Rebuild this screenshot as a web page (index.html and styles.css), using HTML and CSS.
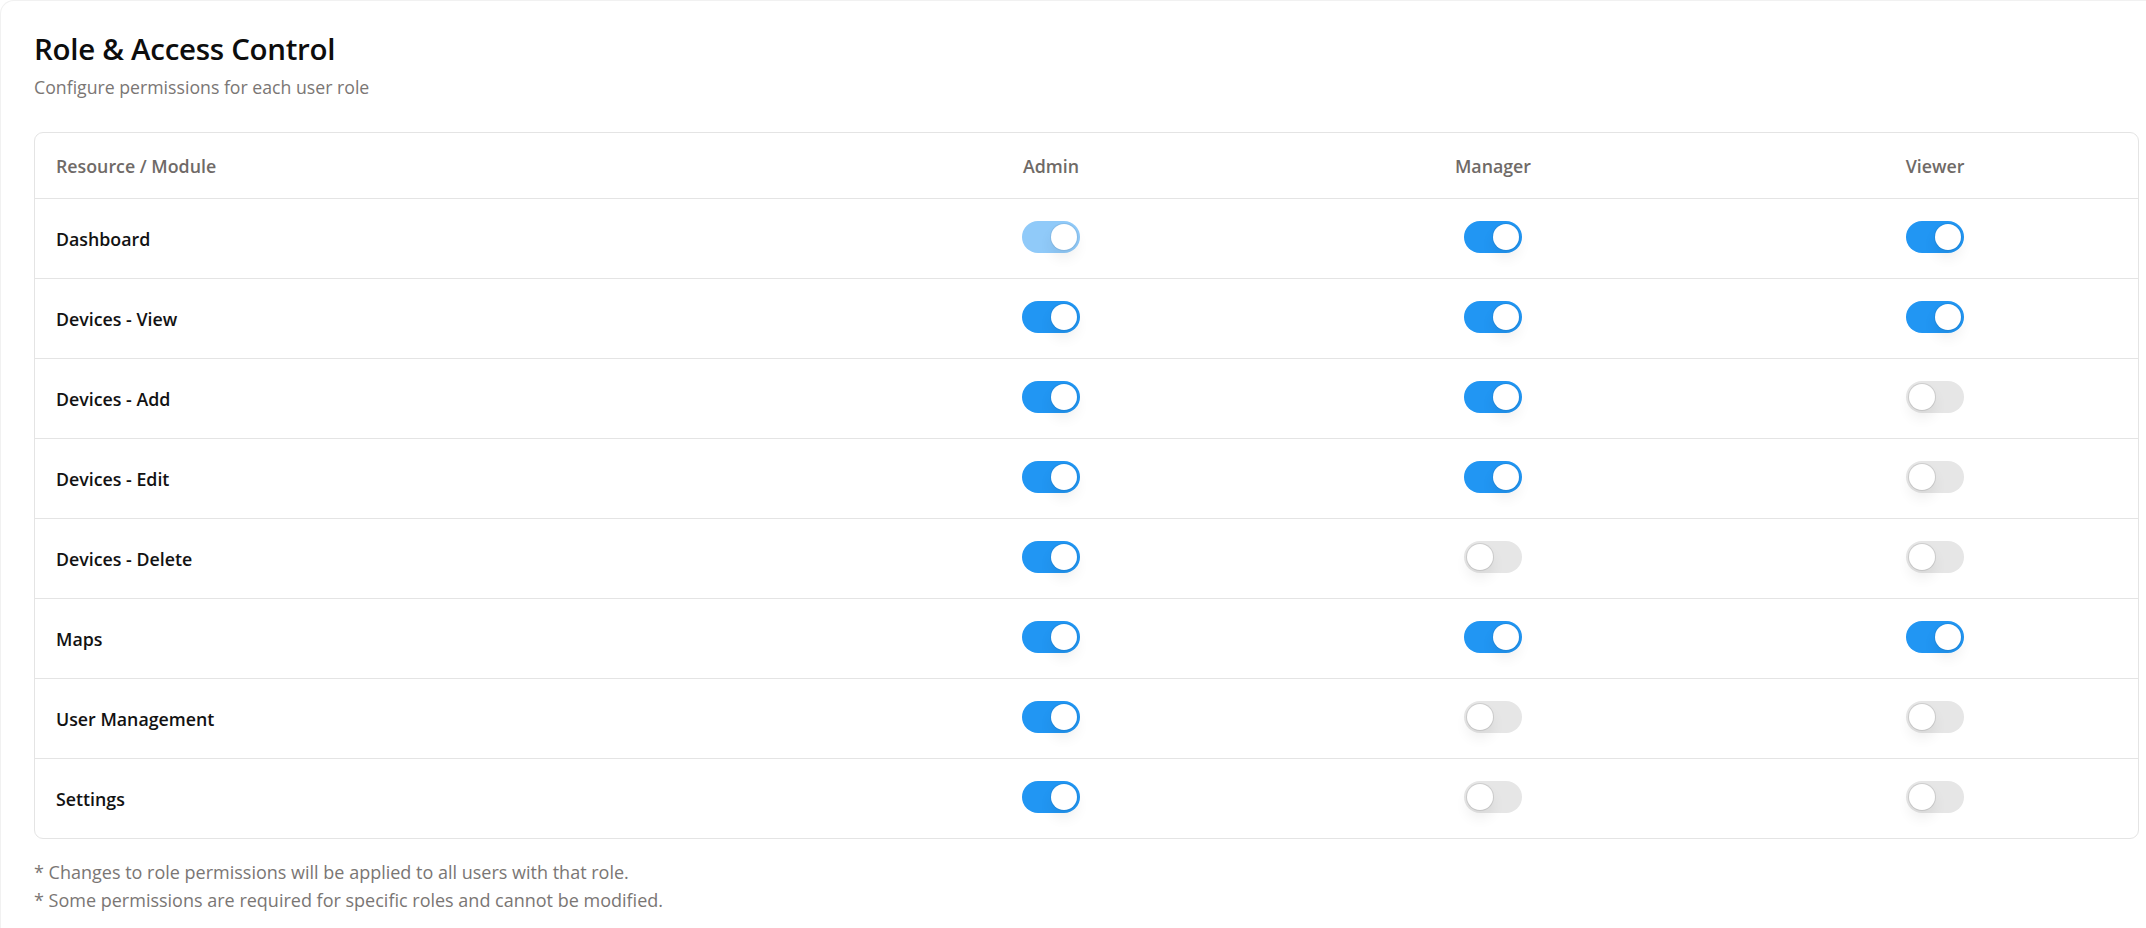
FILE: index.html
```html
<!DOCTYPE html>
<html lang="en">
<head>
<meta charset="utf-8">
<title>Role &amp; Access Control</title>
<link rel="stylesheet" href="styles.css">
</head>
<body>
<div class="page">
  <header class="page-head">
    <h1 class="title">Role &amp; Access Control</h1>
    <p class="subtitle">Configure permissions for each user role</p>
  </header>

  <div class="card">
    <div class="row head">
      <div class="cell name">Resource / Module</div>
      <div class="cell role">Admin</div>
      <div class="cell role">Manager</div>
      <div class="cell role">Viewer</div>
    </div>

    <div class="row">
      <div class="cell name">Dashboard</div>
      <div class="cell role"><span class="toggle on locked"><span class="knob"></span></span></div>
      <div class="cell role"><span class="toggle on"><span class="knob"></span></span></div>
      <div class="cell role"><span class="toggle on"><span class="knob"></span></span></div>
    </div>
    <div class="row">
      <div class="cell name">Devices - View</div>
      <div class="cell role"><span class="toggle on"><span class="knob"></span></span></div>
      <div class="cell role"><span class="toggle on"><span class="knob"></span></span></div>
      <div class="cell role"><span class="toggle on"><span class="knob"></span></span></div>
    </div>
    <div class="row">
      <div class="cell name">Devices - Add</div>
      <div class="cell role"><span class="toggle on"><span class="knob"></span></span></div>
      <div class="cell role"><span class="toggle on"><span class="knob"></span></span></div>
      <div class="cell role"><span class="toggle"><span class="knob"></span></span></div>
    </div>
    <div class="row">
      <div class="cell name">Devices - Edit</div>
      <div class="cell role"><span class="toggle on"><span class="knob"></span></span></div>
      <div class="cell role"><span class="toggle on"><span class="knob"></span></span></div>
      <div class="cell role"><span class="toggle"><span class="knob"></span></span></div>
    </div>
    <div class="row">
      <div class="cell name">Devices - Delete</div>
      <div class="cell role"><span class="toggle on"><span class="knob"></span></span></div>
      <div class="cell role"><span class="toggle"><span class="knob"></span></span></div>
      <div class="cell role"><span class="toggle"><span class="knob"></span></span></div>
    </div>
    <div class="row">
      <div class="cell name">Maps</div>
      <div class="cell role"><span class="toggle on"><span class="knob"></span></span></div>
      <div class="cell role"><span class="toggle on"><span class="knob"></span></span></div>
      <div class="cell role"><span class="toggle on"><span class="knob"></span></span></div>
    </div>
    <div class="row">
      <div class="cell name">User Management</div>
      <div class="cell role"><span class="toggle on"><span class="knob"></span></span></div>
      <div class="cell role"><span class="toggle"><span class="knob"></span></span></div>
      <div class="cell role"><span class="toggle"><span class="knob"></span></span></div>
    </div>
    <div class="row">
      <div class="cell name">Settings</div>
      <div class="cell role"><span class="toggle on"><span class="knob"></span></span></div>
      <div class="cell role"><span class="toggle"><span class="knob"></span></span></div>
      <div class="cell role"><span class="toggle"><span class="knob"></span></span></div>
    </div>
  </div>

  <div class="notes">
    <p>* Changes to role permissions will be applied to all users with that role.</p>
    <p>* Some permissions are required for specific roles and cannot be modified.</p>
  </div>
</div>
</body>
</html>
```

FILE: styles.css
```css
* { box-sizing: border-box; }

html, body {
  margin: 0;
  padding: 0;
  background: #ffffff;
}

body {
  font-family: "Open Sans", "Noto Sans", "Liberation Sans", sans-serif;
  color: #111111;
}

.page {
  min-height: 928px;
  padding: 28px 8px 0 33px;
  border-top: 1px solid #f1f1f1;
  border-left: 1px solid #f1f1f1;
  border-top-left-radius: 14px;
}

.page-head {
  display: flex;
  flex-direction: column;
}

.title {
  margin: 0;
  font-size: 29.5px;
  line-height: 40px;
  font-weight: 600;
  color: #0d0d0d;
  letter-spacing: -0.3px;
}

.subtitle {
  margin: 5px 0 0 0;
  font-size: 17.7px;
  line-height: 26px;
  color: #7a7674;
}

.card {
  margin-top: 32px;
  width: 2105px;
  border: 1px solid #e4e4e4;
  border-radius: 9px;
  display: flex;
  flex-direction: column;
}

.row {
  display: grid;
  grid-template-columns: 1fr 442px 442px 442px;
  height: 80px;
  border-top: 1px solid #e4e4e4;
  align-items: center;
}

.row.head {
  height: 65px;
  border-top: none;
}

.cell.name {
  padding-left: 21px;
  font-size: 17.8px;
  font-weight: 600;
  color: #121212;
}

.row.head .cell {
  font-size: 17.8px;
  font-weight: 600;
  color: #6f6a67;
}

.cell.role {
  display: flex;
  justify-content: center;
  padding-left: 36px;
}

.row:not(.head) .cell.role {
  margin-top: -3px;
}

.toggle {
  position: relative;
  display: inline-flex;
  align-items: center;
  width: 58px;
  height: 32px;
  border-radius: 16px;
  background: #e6e6e6;
  padding: 3px;
}

.toggle.on {
  background: #2196f3;
  justify-content: flex-end;
}

.toggle.on.locked {
  background: #90caf9;
}

.knob {
  width: 26px;
  height: 26px;
  border-radius: 50%;
  background: #ffffff;
  box-shadow: 0 0 0 1px rgba(0, 0, 0, 0.06), 0 8px 14px rgba(0, 0, 0, 0.07);
}

.toggle:not(.on) .knob {
  box-shadow: 0 0 0 1px rgba(0, 0, 0, 0.1), 0 8px 14px rgba(0, 0, 0, 0.07);
}

.notes {
  margin-top: 19px;
  font-size: 18px;
  line-height: 28px;
  color: #7a7674;
}

.notes p {
  margin: 0;
}
```
